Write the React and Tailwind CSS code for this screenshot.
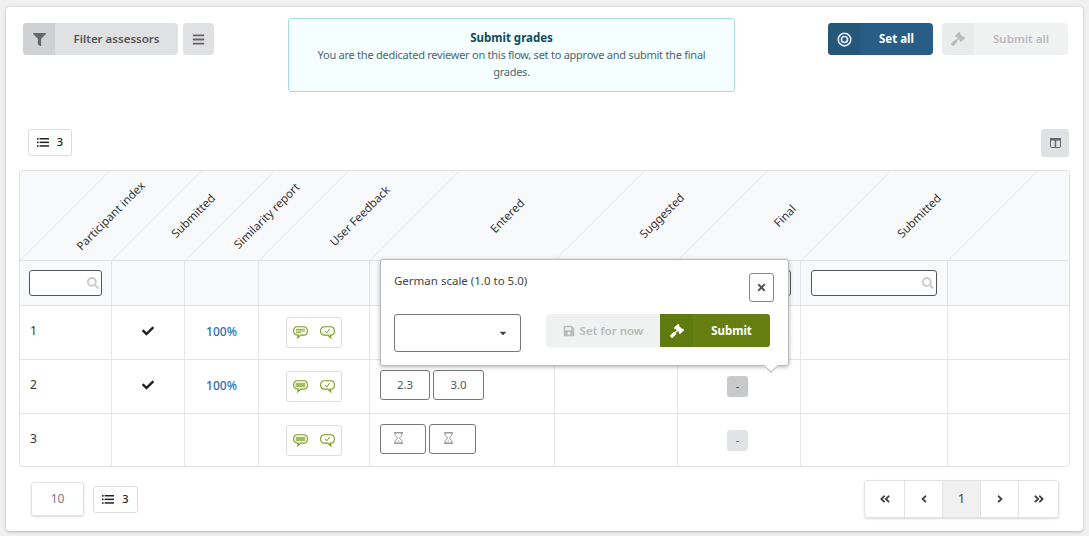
import React from "react";
import {
  FaFilter, FaBars, FaGavel, FaSearch, FaCheck, FaSave, FaTimes, FaCaretDown,
  FaAngleDoubleLeft, FaAngleDoubleRight, FaAngleLeft, FaAngleRight,
} from "react-icons/fa";

const cols = "grid-cols-[92px_73px_74px_111px_185px_123px_123px_147px_121px]";

function Bullseye() {
  return (
    <svg width="15" height="15" viewBox="0 0 16 16" fill="none" stroke="currentColor">
      <circle cx="8" cy="8" r="6.7" strokeWidth="1.8" />
      <circle cx="8" cy="8" r="3.2" strokeWidth="1.8" />
    </svg>
  );
}

function ColumnsIcon() {
  return (
    <svg width="11" height="10" viewBox="0 0 11 10" fill="none">
      <rect x="0.5" y="0.5" width="10" height="9" rx="0.8" stroke="#666" />
      <rect x="0" y="0" width="11" height="2.6" fill="#666" />
      <rect x="4.8" y="2" width="1.4" height="7.5" fill="#666" />
    </svg>
  );
}

function ListIcon() {
  return (
    <svg width="12" height="9" viewBox="0 0 12 9" fill="#222">
      <rect x="0" y="0" width="1.6" height="1.6" />
      <rect x="0" y="3.6" width="1.6" height="1.6" />
      <rect x="0" y="7.2" width="1.6" height="1.6" />
      <rect x="2.6" y="0" width="9.4" height="1.5" />
      <rect x="2.6" y="3.6" width="9.4" height="1.5" />
      <rect x="2.6" y="7.2" width="9.4" height="1.5" />
    </svg>
  );
}

function Bubble({ kind, filled }) {
  const check = kind === "check";
  return (
    <svg width="15" height="13" viewBox="0 0 15 13" fill="none">
      <path
        d={check
          ? "M4.6.7h5.8c2.3 0 4 1.6 4 4.2s-1.7 4.2-4 4.2h-.2l.6 2.9-3-2.9H4.6C2.300 9.100.6 7.500.6 4.900S2.300.7 4.600.7z"
          : "M4.6.7h5.8c2.300 0 4 1.600 4 4.200s-1.700 4.200-4 4.200H7.800l-3 2.700.5-2.700h-.7C2.300 9.100.6 7.500.6 4.900S2.300.7 4.600.7z"}
        stroke="#7c9a1e"
        strokeWidth="1.1"
        fill="#fff"
      />
      {kind === "text" && !filled && (
        <path d="M3 3.300h9M3 5h9M3 6.700h5" stroke="#7c9a1e" strokeWidth="0.9" />
      )}
      {kind === "text" && filled && <rect x="2.600" y="2.800" width="9.600" height="4.400" fill="#a3bb62" />}
      {check && <path d="M5 4.900l1.800 2 2.900-4" stroke="#7c9a1e" strokeWidth="1" />}
    </svg>
  );
}

function Hourglass() {
  return (
    <svg width="9" height="12" viewBox="0 0 9 12" fill="none" stroke="#999">
      <path d="M0 .8h9M0 11.200h9" strokeWidth="1.500" />
      <path d="M1.200 1v2.400L3.700 6 1.200 8.600V11M7.800 1v2.400L5.300 6l2.500 2.600V11" strokeWidth="1" />
      <path d="M2 10.500L4.500 8 7 10.500z" fill="#ccc" stroke="none" />
    </svg>
  );
}

function HeaderCell({ label }) {
  return (
    <div className="relative flex items-center justify-center h-[89px]">
      <div className="absolute left-0 bottom-0 h-full w-px bg-[#e4e5e7] origin-bottom -skew-x-[45deg]" />
      {label && (
        <span className="translate-x-[45px] -rotate-45 whitespace-nowrap text-[11.5px] text-[#333]">
          {label}
        </span>
      )}
    </div>
  );
}

function FilterCell({ input, last, mx = "mx-[9px]" }) {
  return (
    <div className={`relative h-[45px] flex items-start bg-[#f8f9fb] border-b border-[#e2e2e2] ${last ? "" : "border-r"}`}>
      {input && (
        <div className={`relative mt-[9px] w-full ${mx}`}>
          <input aria-label="filter" className="block w-full h-[26px] bg-white border border-[#555] rounded-[3px] outline-none" />
          <FaSearch className="absolute right-[3px] top-[7px] text-[#ccc]" size={12} />
        </div>
      )}
    </div>
  );
}

function Cell({ children, last, bottom = true, className = "" }) {
  return (
    <div className={`border-[#e6e6e6] flex items-center ${last ? "" : "border-r"} ${bottom ? "border-b" : ""} ${className}`}>
      {children}
    </div>
  );
}

function Feedback({ filled }) {
  return (
    <div className="w-[56px] h-[31px] ml-[27px] border border-[#ddd] rounded-[3px] flex items-center justify-between px-[6px]">
      <Bubble kind="text" filled={filled} />
      <Bubble kind="check" />
    </div>
  );
}

function GradeBox({ children, w, className = "" }) {
  return (
    <div className={`h-[30px] border border-[#777] rounded-[3px] flex items-center justify-center text-[11.5px] text-[#555] ${w} ${className}`}>
      {children}
    </div>
  );
}

function CountButton({ w }) {
  return (
    <div className={`h-[27px] border border-[#ddd] rounded-[3px] bg-white flex items-center justify-center gap-[8px] text-[11px] font-medium text-[#222] ${w}`}>
      <ListIcon />
      <span>3</span>
    </div>
  );
}

function PageButton({ children, w, active, last }) {
  return (
    <div className={`h-full flex items-center justify-center text-[#444] text-[13px] ${w} ${last ? "" : "border-r border-[#e3e3e3]"} ${active ? "bg-[#f0f0f0]" : ""}`}>
      {children}
    </div>
  );
}

export default function App() {
  return (
    <div className="h-[536px] bg-[#f0f0f0] p-[6px] pb-[5px] font-['Noto_Sans','Open_Sans',sans-serif] overflow-hidden">
      <div className="h-full bg-white rounded-[4px] border-t border-[#e2e2e2] shadow-[0_1px_3px_rgba(0,0,0,0.25)] px-[13px] pt-[11px]">
        {/* toolbar */}
        <div className="flex items-start h-[75px] pl-[4px]">
          <div className="flex gap-[5px] mt-[5px]">
            <div className="flex w-[155px] h-[32px] rounded-[4px] bg-[#e0e1e3] overflow-hidden text-[#555]">
              <div className="w-[32px] bg-[#d0d1d3] flex items-center justify-center">
                <FaFilter size={13} className="text-[#666]" />
              </div>
              <div className="flex-1 flex items-center justify-center text-[11.5px] font-semibold">Filter assessors</div>
            </div>
            <div className="w-[31px] h-[32px] rounded-[4px] bg-[#e0e1e3] flex items-center justify-center">
              <FaBars size={13} className="text-[#666]" />
            </div>
          </div>
          <div className="ml-[74px] w-[447px] h-[74px] bg-[#f5ffff] border border-[#a9d9e0] rounded-[3px] text-center px-[20px] pt-[10px] leading-[17px] text-[#4a6670]">
            <div className="text-[11.5px] font-bold text-[#0f4a5c]">Submit grades</div>
            <div className="text-[11px] tracking-[-0.25px]">You are the dedicated reviewer on this flow, set to approve and submit the final grades.</div>
          </div>
          <div className="ml-auto mr-[2px] flex gap-[9px] mt-[5px]">
            <div className="flex w-[105px] h-[32px] rounded-[4px] bg-[#285d85] overflow-hidden text-white">
              <div className="w-[32px] bg-[#255779] flex items-center justify-center text-[#dfe8ee]">
                <Bullseye />
              </div>
              <div className="flex-1 flex items-center justify-center text-[11.5px] font-bold">Set all</div>
            </div>
            <div className="flex w-[126px] h-[32px] rounded-[4px] bg-[#f0f1f1] overflow-hidden text-[#bbb]">
              <div className="w-[32px] bg-[#eaebeb] flex items-center justify-center">
                <FaGavel size={14} />
              </div>
              <div className="flex-1 flex items-center justify-center text-[11.5px] font-semibold">Submit all</div>
            </div>
          </div>
        </div>

        {/* controls */}
        <div className="flex items-start justify-between mt-[36px] pl-[9px] pr-[1px]">
          <CountButton w="w-[44px]" />
          <div className="w-[28px] h-[28px] rounded-[3px] bg-[#e0e1e3] flex items-center justify-center">
            <ColumnsIcon />
          </div>
        </div>

        {/* table */}
        <div className="relative mt-[13px] w-[1051px] h-[297px] border border-[#dfdfdf] rounded-[4px]">
          <div className={`grid ${cols} text-[12px] text-[#333] overflow-hidden rounded-[4px]`}>
            <div className="col-span-9 grid grid-cols-subgrid bg-[#f8f9fb] border-b border-[#e2e2e2]">
              <HeaderCell label="Participant index" />
              <HeaderCell label="Submitted" />
              <HeaderCell label="Similarity report" />
              <HeaderCell label="User Feedback" />
              <HeaderCell label="Entered" />
              <HeaderCell label="Suggested" />
              <HeaderCell label="Final" />
              <HeaderCell label="Submitted" />
              <HeaderCell />
            </div>

            <FilterCell input />
            <FilterCell />
            <FilterCell />
            <FilterCell />
            <FilterCell />
            <FilterCell />
            <FilterCell input />
            <FilterCell input mx="mx-[10px]" />
            <FilterCell last />

            {/* row 1 */}
            <Cell className="h-[54px] pl-[10px] pb-[3px]">1</Cell>
            <Cell className="justify-center pb-[3px]"><FaCheck size={12} className="text-[#222]" /></Cell>
            <Cell className="justify-center pb-[2px] text-[#2a6fb5] font-medium">100%</Cell>
            <Cell><Feedback /></Cell>
            <Cell />
            <Cell />
            <Cell />
            <Cell />
            <Cell last />

            {/* row 2 */}
            <Cell className="h-[54px] pl-[10px] pb-[3px]">2</Cell>
            <Cell className="justify-center pb-[3px]"><FaCheck size={12} className="text-[#222]" /></Cell>
            <Cell className="justify-center pb-[2px] text-[#2a6fb5] font-medium">100%</Cell>
            <Cell><Feedback filled /></Cell>
            <Cell className="pl-[10px] gap-[3px] pb-[3px]">
              <GradeBox w="w-[50px]">2.3</GradeBox>
              <GradeBox w="w-[51px]">3.0</GradeBox>
            </Cell>
            <Cell />
            <Cell className="justify-center pr-[3px]">
              <div className="w-[21px] h-[21px] rounded-[3px] bg-[#c8c9cb] flex items-center justify-center text-[11px] text-[#444]">-</div>
            </Cell>
            <Cell />
            <Cell last />

            {/* row 3 */}
            <Cell bottom={false} className="h-[53px] pl-[10px] pb-[3px]">3</Cell>
            <Cell bottom={false} />
            <Cell bottom={false} />
            <Cell bottom={false}><Feedback filled /></Cell>
            <Cell bottom={false} className="pl-[10px] gap-[3px] pb-[3px]">
              <GradeBox w="w-[46px]" className="pr-[9px] pb-[3px]"><Hourglass /></GradeBox>
              <GradeBox w="w-[47px]" className="pr-[9px] pb-[3px]"><Hourglass /></GradeBox>
            </Cell>
            <Cell bottom={false} />
            <Cell bottom={false} className="justify-center pr-[3px]">
              <div className="w-[21px] h-[21px] rounded-[3px] bg-[#e2e3e5] flex items-center justify-center text-[11px] text-[#555]">-</div>
            </Cell>
            <Cell bottom={false} />
            <Cell bottom={false} last />
          </div>

          {/* popover */}
          <div className="absolute left-[360px] top-[88px] w-[409px] h-[107px] bg-white border border-[#bbb] rounded-[3px] shadow-[0_1px_4px_rgba(0,0,0,0.3)] pl-[13px] pr-[17px] pt-[13px] text-[11.5px] text-[#444]">
            <div className="leading-[16px]">German scale (1.0 to 5.0)</div>
            <div className="absolute right-[14px] top-[13px] w-[25px] h-[29px] border border-[#888] rounded-[3px] flex items-center justify-center">
              <FaTimes size={11} className="text-[#555]" />
            </div>
            <div className="flex items-start mt-[25px]">
              <div className="w-[127px] h-[38px] border border-[#777] rounded-[3px] flex items-center justify-end pr-[12px]">
                <FaCaretDown size={10} className="text-[#444]" />
              </div>
              <div className="ml-[25px] flex h-[33px] w-[224px] rounded-[3px] overflow-hidden">
                <div className="w-[114px] bg-[#f0f1f1] flex items-center justify-center gap-[5px] text-[#bbb] font-semibold">
                  <FaSave size={12} />
                  <span>Set for now</span>
                </div>
                <div className="w-[33px] bg-[#5f7a0e] flex items-center justify-center text-white">
                  <FaGavel size={14} />
                </div>
                <div className="flex-1 bg-[#667f10] flex items-center justify-center text-white font-bold">Submit</div>
              </div>
            </div>
            <div className="absolute right-[12px] -bottom-[6px] w-[10px] h-[10px] bg-white rotate-45 border-r border-b border-[#bbb]" />
          </div>
        </div>

        {/* footer */}
        <div className="flex items-start justify-between mt-[13px] pl-[12px] pr-[11px]">
          <div className="flex items-center gap-[9px] mt-[2px]">
            <div className="w-[53px] h-[34px] border border-[#e2e2e2] rounded-[3px] shadow-[0_1px_2px_rgba(0,0,0,0.15)] flex items-center justify-center text-[12px] text-[#777]">10</div>
            <CountButton w="w-[45px]" />
          </div>
          <div className="flex h-[38px] w-[195px] border border-[#e2e2e2] rounded-[3px] shadow-[0_1px_2px_rgba(0,0,0,0.15)] overflow-hidden">
            <PageButton w="w-[40px]"><FaAngleDoubleLeft size={12} /></PageButton>
            <PageButton w="w-[38px]"><FaAngleLeft size={12} /></PageButton>
            <PageButton w="w-[38px]" active>1</PageButton>
            <PageButton w="w-[38px]"><FaAngleRight size={12} /></PageButton>
            <PageButton w="flex-1" last><FaAngleDoubleRight size={12} /></PageButton>
          </div>
        </div>
      </div>
    </div>
  );
}
